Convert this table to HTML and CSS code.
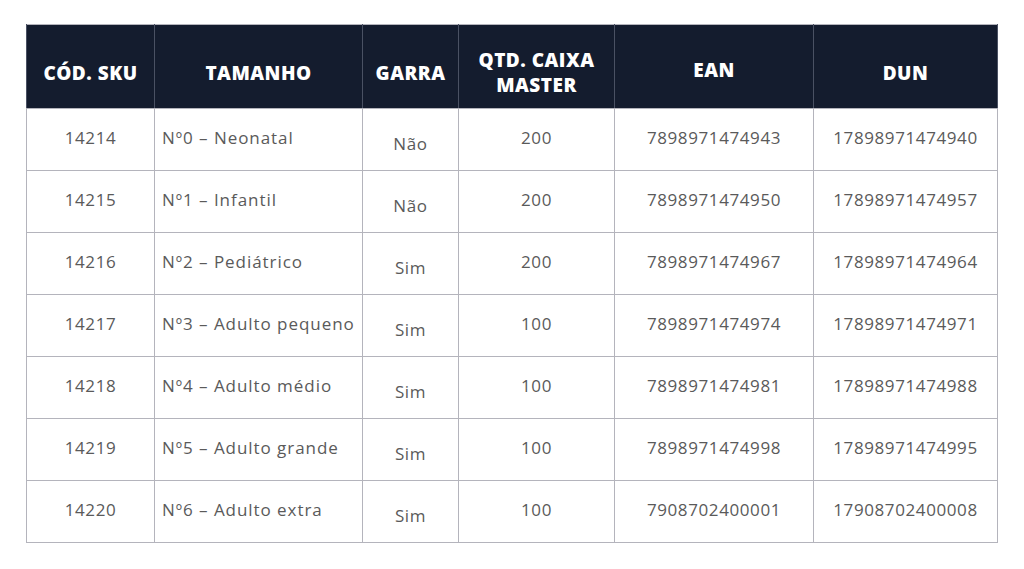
FILE: index.html
```html
<!DOCTYPE html>
<html lang="pt-BR">
<head>
<meta charset="utf-8">
<title>Tabela SKU</title>
<link rel="stylesheet" href="styles.css">
</head>
<body>
<table class="sku-table">
  <colgroup>
    <col class="c-sku"><col class="c-tam"><col class="c-garra"><col class="c-qtd"><col class="c-ean"><col class="c-dun">
  </colgroup>
  <thead>
    <tr>
      <th>CÓD. SKU</th>
      <th>TAMANHO</th>
      <th>GARRA</th>
      <th class="two">QTD. CAIXA<br>MASTER</th>
      <th class="up">EAN</th>
      <th>DUN</th>
    </tr>
  </thead>
  <tbody>
    <tr><td>14214</td><td class="left">Nº0 – Neonatal</td><td class="low">Não</td><td>200</td><td>7898971474943</td><td>17898971474940</td></tr>
    <tr><td>14215</td><td class="left">Nº1 – Infantil</td><td class="low">Não</td><td>200</td><td>7898971474950</td><td>17898971474957</td></tr>
    <tr><td>14216</td><td class="left">Nº2 – Pediátrico</td><td class="low">Sim</td><td>200</td><td>7898971474967</td><td>17898971474964</td></tr>
    <tr><td>14217</td><td class="left">Nº3 – Adulto pequeno</td><td class="low">Sim</td><td>100</td><td>7898971474974</td><td>17898971474971</td></tr>
    <tr><td>14218</td><td class="left">Nº4 – Adulto médio</td><td class="low">Sim</td><td>100</td><td>7898971474981</td><td>17898971474988</td></tr>
    <tr><td>14219</td><td class="left">Nº5 – Adulto grande</td><td class="low">Sim</td><td>100</td><td>7898971474998</td><td>17898971474995</td></tr>
    <tr><td>14220</td><td class="left">Nº6 – Adulto extra</td><td class="low">Sim</td><td>100</td><td>7908702400001</td><td>17908702400008</td></tr>
  </tbody>
</table>
</body>
</html>
```
FILE: styles.css
```css
html, body {
  margin: 0;
  padding: 0;
  background: #ffffff;
}
body {
  font-family: "Open Sans", "DejaVu Sans", sans-serif;
}
.sku-table {
  margin: 24px 0 0 26px;
  border-collapse: collapse;
  table-layout: fixed;
  width: 971px;
  border: 1px solid #b4b4bc;
}
.c-sku { width: 128px; }
.c-tam { width: 208px; }
.c-garra { width: 96px; }
.c-qtd { width: 156px; }
.c-ean { width: 199px; }
.c-dun { width: 184px; }

.sku-table th {
  background: #141c2e;
  color: #ffffff;
  font-weight: 800;
  font-size: 19px;
  letter-spacing: 0.5px;
  line-height: 25px;
  height: 84px;
  padding: 14px 0 0;
  box-sizing: border-box;
  text-align: center;
  vertical-align: middle;
  border-left: 1px solid #4a5163;
  border-right: 1px solid #4a5163;
  border-bottom: 1px solid #b4b4bc;
  white-space: nowrap;
}
.sku-table th.two { padding-top: 12px; }
.sku-table th.up { padding: 8px 0 0; }

.sku-table td {
  height: 62px;
  box-sizing: border-box;
  border: 1px solid #b4b4bc;
  color: #5a5a5a;
  font-size: 17px;
  letter-spacing: 0.6px;
  text-align: center;
  vertical-align: middle;
  padding: 0 0 4px;
  white-space: nowrap;
}
.sku-table td.left {
  text-align: left;
  padding-left: 7px;
  letter-spacing: 0.95px;
}
.sku-table td.low {
  padding: 8px 0 0;
}
```
